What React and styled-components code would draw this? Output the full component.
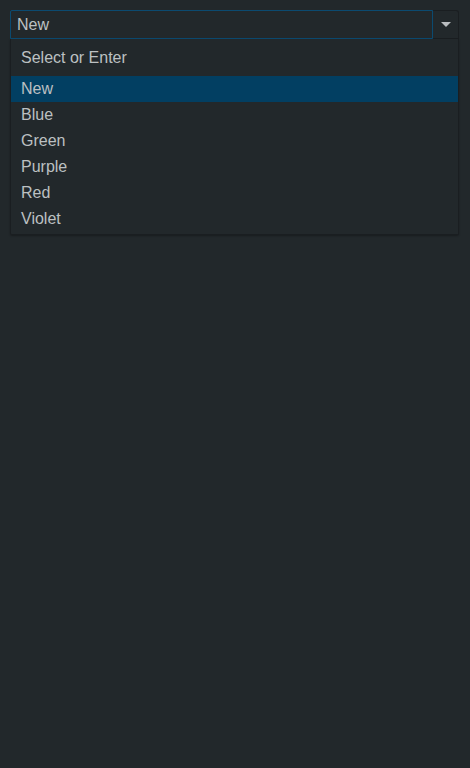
import styled, { createGlobalStyle } from 'styled-components';
import { useState } from 'react';

const options = ['New', 'Blue', 'Green', 'Purple', 'Red', 'Violet'];

export default function App() {
  const [value, setValue] = useState('New');
  return (
    <>
      <GlobalStyle />
      <Page>
        <Combo>
          <Field>
            <StyledInput value={value} onChange={(e) => setValue(e.target.value)} />
            <ToggleButton aria-label="Toggle">
              <Caret />
            </ToggleButton>
          </Field>
          <Menu>
            <MenuHeader>Select or Enter</MenuHeader>
            {options.map((opt) => (
              <MenuItem key={opt} active={opt === value} onClick={() => setValue(opt)}>
                {opt}
              </MenuItem>
            ))}
          </Menu>
        </Combo>
      </Page>
    </>
  );
}

const GlobalStyle = createGlobalStyle`
  html, body {
    margin: 0;
    padding: 0;
    background: #22282b;
    font-family: "Liberation Sans", Arial, sans-serif;
  }
`;

const Page = styled.div`
  min-height: 768px;
  padding: 10px 11px 0 10px;
  box-sizing: border-box;
  background: #22282b;
`;

const Combo = styled.div`
  display: flex;
  flex-direction: column;
`;

const Field = styled.div`
  display: flex;
  height: 29px;
`;

const StyledInput = styled.input`
  flex: 1;
  min-width: 0;
  box-sizing: border-box;
  height: 29px;
  margin: 0;
  padding: 0 6px;
  border: 1px solid #0b4a70;
  border-radius: 2px 0 0 0;
  background: #22282b;
  color: #bcc0c2;
  font-family: inherit;
  font-size: 16px;
  outline: none;
`;

const ToggleButton = styled.button`
  width: 26px;
  height: 29px;
  box-sizing: border-box;
  margin: 0;
  padding: 0;
  border: 1px solid #1a1e21;
  border-left: none;
  border-radius: 0 3px 0 0;
  background: #22282b;
  display: flex;
  align-items: center;
  justify-content: center;
  cursor: pointer;
`;

const Caret = styled.span`
  width: 0;
  height: 0;
  border-left: 5px solid transparent;
  border-right: 5px solid transparent;
  border-top: 5px solid #b9bdc0;
  margin-left: 1px;
`;

const Menu = styled.div`
  display: flex;
  flex-direction: column;
  border: 1px solid #1a1e21;
  border-top: none;
  border-radius: 0 0 2px 2px;
  padding-bottom: 2px;
  box-shadow: 0 1px 2px rgba(0, 0, 0, 0.3);
`;

const MenuHeader = styled.div`
  height: 37px;
  display: flex;
  align-items: center;
  padding-left: 10px;
  padding-top: 1px;
  box-sizing: border-box;
  color: #bcc0c2;
  font-size: 16px;
`;

const MenuItem = styled.div`
  height: 26px;
  display: flex;
  align-items: center;
  padding-left: 10px;
  color: #bcc0c2;
  font-size: 16px;
  background: ${({ active }) => (active ? '#023f62' : 'transparent')};
  cursor: pointer;
`;
